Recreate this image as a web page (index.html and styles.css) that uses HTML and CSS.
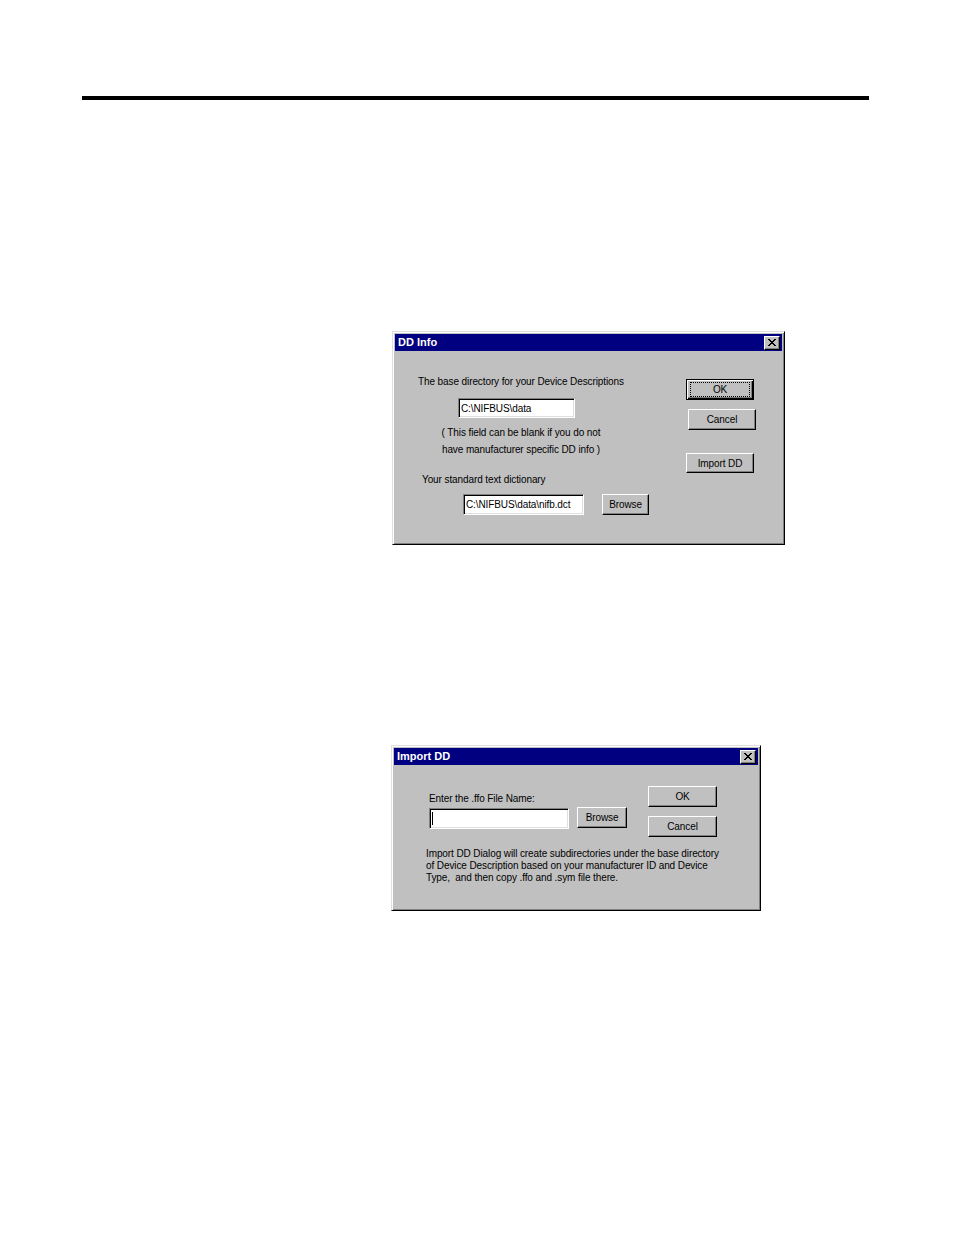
FILE: index.html
```html
<!DOCTYPE html>
<html>
<head>
<meta charset="utf-8">
<link rel="stylesheet" href="styles.css">
</head>
<body>
<div class="page">
  <div class="rule"></div>

  <div class="dialog dlg-info">
    <div class="titlebar">
      <span class="title">DD Info</span>
      <span class="close"><svg width="8" height="7" viewBox="0 0 8 7"><path d="M0 0h2v1h1v1h2v-1h1v-1h2v1h-1v1h-1v1h-1v1h1v1h1v1h1v1h-2v-1h-1v-1h-2v1h-1v1h-2v-1h1v-1h1v-1h1v-1h-1v-1h-1v-1h-1z" fill="#000"/></svg></span>
    </div>
    <div class="body info-body">
      <div class="col-left">
        <div class="label l-base">The base directory for your Device Descriptions</div>
        <div class="field f-base">C:\NIFBUS\data</div>
        <div class="note">( This field can be blank if you do not<br>have manufacturer specific DD info )</div>
        <div class="label l-dict">Your standard text dictionary</div>
        <div class="row r-dict">
          <div class="field f-dict">C:\NIFBUS\data\nifb.dct</div>
          <div class="btn b-browse1">Browse</div>
        </div>
      </div>
      <div class="col-right">
        <div class="btn default b-ok1"><span class="focus">OK</span></div>
        <div class="btn b-cancel1">Cancel</div>
        <div class="btn b-import">Import DD</div>
      </div>
    </div>
  </div>

  <div class="dialog dlg-import">
    <div class="titlebar">
      <span class="title">Import DD</span>
      <span class="close"><svg width="8" height="7" viewBox="0 0 8 7"><path d="M0 0h2v1h1v1h2v-1h1v-1h2v1h-1v1h-1v1h-1v1h1v1h1v1h1v1h-2v-1h-1v-1h-2v1h-1v1h-2v-1h1v-1h1v-1h1v-1h-1v-1h-1v-1h-1z" fill="#000"/></svg></span>
    </div>
    <div class="body import-body">
      <div class="top-row">
        <div class="col-left2">
          <div class="label l-ffo">Enter the .ffo File Name:</div>
          <div class="row r-ffo">
            <div class="field f-ffo"><span class="caret"></span></div>
            <div class="btn b-browse2">Browse</div>
          </div>
        </div>
        <div class="col-right2">
          <div class="btn b-ok2">OK</div>
          <div class="btn b-cancel2">Cancel</div>
        </div>
      </div>
      <div class="para">Import DD Dialog will create subdirectories under the base directory<br>of Device Description based on your manufacturer ID and Device<br>Type,&nbsp; and then copy .ffo and .sym file there.</div>
    </div>
  </div>
</div>
</body>
</html>
```

FILE: styles.css
```css
html, body {
  margin: 0;
  padding: 0;
  background: #fff;
}
.page {
  width: 954px;
  height: 1235px;
  overflow: hidden;
  font-family: "Liberation Sans", Arial, sans-serif;
  color: #000;
}
.rule {
  margin-left: 82px;
  margin-top: 96px;
  width: 787px;
  height: 4px;
  background: #000;
}

/* Window frame */
.dialog {
  box-sizing: border-box;
  background: #c0c0c0;
  border: 1px solid;
  border-color: #dfdfdf #000 #000 #dfdfdf;
  box-shadow: inset 1px 1px 0 #fff, inset -1px -1px 0 #808080;
  padding: 2px;
}
.dlg-info {
  margin-left: 392px;
  margin-top: 231px;
  width: 393px;
  height: 214px;
}
.dlg-import {
  margin-left: 391px;
  margin-top: 200px;
  width: 370px;
  height: 166px;
}
.titlebar {
  height: 17px;
  background: #000080;
  display: flex;
  align-items: center;
  justify-content: space-between;
  padding: 0 2px 0 3px;
}
.title {
  color: #fff;
  font-weight: bold;
  font-size: 11px;
  line-height: 17px;
}
.close {
  box-sizing: border-box;
  width: 16px;
  height: 14px;
  background: #c0c0c0;
  border: 1px solid;
  border-color: #fff #000 #000 #fff;
  box-shadow: inset -1px -1px 0 #808080;
  display: flex;
  align-items: center;
  justify-content: center;
}

/* Common controls */
.label, .note, .para, .btn, .field {
  font-size: 10px;
  letter-spacing: -0.1px;
}
.label {
  line-height: 12px;
  white-space: nowrap;
}
.field {
  box-sizing: border-box;
  background: #fff;
  border: 1px solid;
  border-color: #808080 #fff #fff #808080;
  box-shadow: inset 1px 1px 0 #000, inset -1px -1px 0 #dfdfdf;
  padding: 0 2px;
  display: flex;
  align-items: center;
  white-space: nowrap;
  overflow: hidden;
}
.btn {
  box-sizing: border-box;
  background: #c0c0c0;
  border: 1px solid;
  border-color: #fff #000 #000 #fff;
  box-shadow: inset -1px -1px 0 #808080;
  display: flex;
  align-items: center;
  justify-content: center;
  white-space: nowrap;
}
.btn.default {
  border: 1px solid #000;
  box-shadow: inset 1px 1px 0 #fff, inset -1px -1px 0 #000, inset -2px -2px 0 #808080;
}
.focus {
  box-sizing: border-box;
  width: 60px;
  height: 15px;
  border: 1px dotted #000;
  display: flex;
  align-items: center;
  justify-content: center;
}
.row {
  display: flex;
  align-items: flex-start;
}

/* DD Info */
.info-body {
  display: grid;
  grid-template-columns: 291px 72px;
}
.l-base { margin: 25px 0 0 23px; }
.f-base { margin: 10px 0 0 63px; width: 117px; height: 20px; }
.note {
  margin: 6px 0 0 41px;
  width: 170px;
  text-align: center;
  line-height: 17px;
}
.l-dict { margin: 16px 0 0 27px; }
.r-dict { margin: 8px 0 0 68px; }
.f-dict { width: 121px; height: 21px; }
.b-browse1 { margin-left: 18px; width: 47px; height: 21px; }
.col-right { display: flex; flex-direction: column; align-items: flex-start; }
.b-ok1 { margin-top: 28px; width: 68px; height: 21px; }
.b-cancel1 { margin: 9px 0 0 2px; width: 68px; height: 21px; }
.b-import { margin-top: 23px; width: 68px; height: 20px; }

/* Import DD */
.top-row { display: flex; }
.col-left2 { width: 254px; padding-left: 35px; box-sizing: border-box; }
.l-ffo { margin-top: 28px; }
.r-ffo { margin-top: 3px; }
.f-ffo { width: 140px; height: 21px; }
.caret { width: 1px; height: 13px; background: #000; }
.b-browse2 { margin: -1px 0 0 8px; width: 50px; height: 21px; }
.col-right2 { display: flex; flex-direction: column; }
.b-ok2 { margin-top: 21px; width: 69px; height: 21px; }
.b-cancel2 { margin-top: 9px; width: 69px; height: 21px; }
.para {
  margin: 11px 0 0 32px;
  line-height: 12px;
  white-space: nowrap;
}
```
